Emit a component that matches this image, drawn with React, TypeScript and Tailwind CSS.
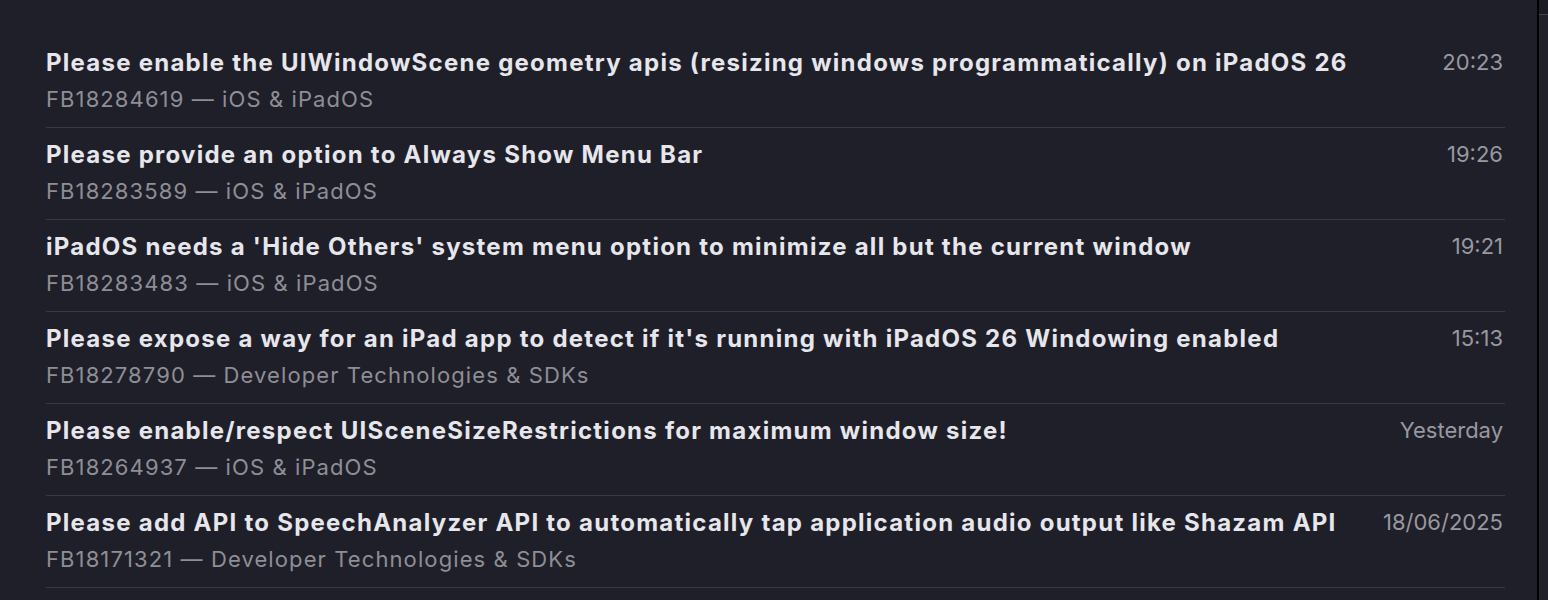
import React from "react";

const rows = [
  { title: "Please enable the UIWindowScene geometry apis (resizing windows programmatically) on iPadOS 26", sub: "FB18284619 — iOS & iPadOS", time: "20:23" },
  { title: "Please provide an option to Always Show Menu Bar", sub: "FB18283589 — iOS & iPadOS", time: "19:26" },
  { title: "iPadOS needs a 'Hide Others' system menu option to minimize all but the current window", sub: "FB18283483 — iOS & iPadOS", time: "19:21" },
  { title: "Please expose a way for an iPad app to detect if it's running with iPadOS 26 Windowing enabled", sub: "FB18278790 — Developer Technologies & SDKs", time: "15:13" },
  { title: "Please enable/respect UISceneSizeRestrictions for maximum window size!", sub: "FB18264937 — iOS & iPadOS", time: "Yesterday" },
  { title: "Please add API to SpeechAnalyzer API to automatically tap application audio output like Shazam API", sub: "FB18171321 — Developer Technologies & SDKs", time: "18/06/2025" },
];

export default function App() {
  return (
    <div
      className="flex h-[600px] w-[1548px] overflow-hidden bg-[#1f1f2a]"
      style={{ fontFamily: "Inter, 'Noto Sans', sans-serif" }}
    >
      <div className="flex-1 pl-[46px] pr-[32px] pt-9">
        {rows.map((r) => (
          <div key={r.sub + r.time} className="flex border-b border-[#393944] pt-[11px] pb-[14px]">
            <div className="flex-1 min-w-0">
              <div className="text-[24px] leading-[32px] font-bold tracking-[1.25px] text-[#e6e6eb] whitespace-nowrap">{r.title}</div>
              <div className="mt-[6px] text-[22px] leading-[28px] tracking-[1.1px] text-[#8e8e95] whitespace-nowrap">{r.sub}</div>
            </div>
            <div className="text-[22px] leading-[30px] text-[#98989f] pr-[2px]">{r.time}</div>
          </div>
        ))}
      </div>
      <div className="w-[2px] bg-black" />
      <div className="w-[9px] bg-[#22222c]">
        <div className="h-[14px] bg-[#1c1c25]" />
        <div className="h-[1px] bg-[#44444c]" />
      </div>
    </div>
  );
}
